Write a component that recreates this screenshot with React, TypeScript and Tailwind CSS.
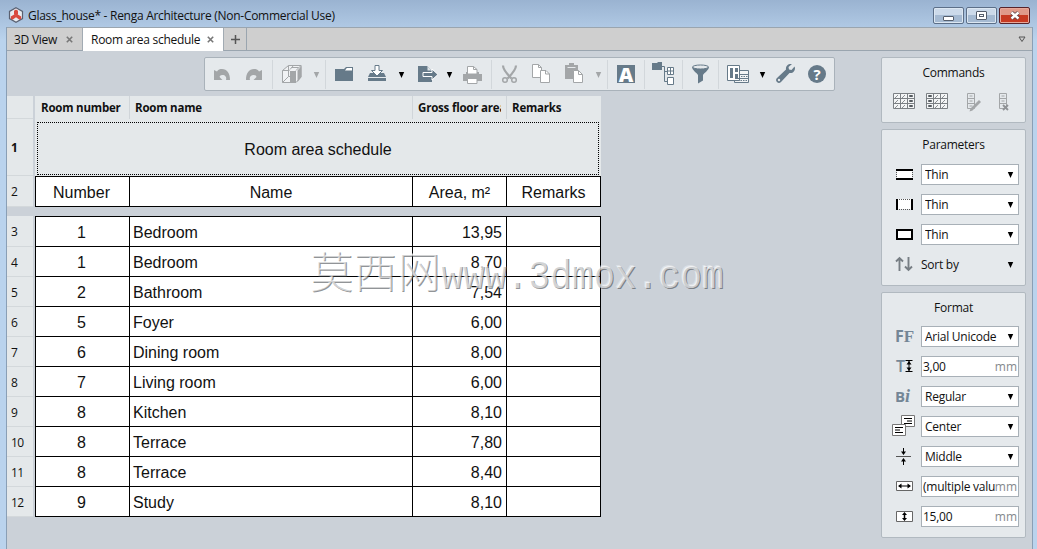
import type { ReactNode } from "react";

const rows = [
    ["1", "Bedroom", "13,95"],
    ["1", "Bedroom", "8,70"],
    ["2", "Bathroom", "7,54"],
    ["5", "Foyer", "6,00"],
    ["6", "Dining room", "8,00"],
    ["7", "Living room", "6,00"],
    ["8", "Kitchen", "8,10"],
    ["8", "Terrace", "7,80"],
    ["8", "Terrace", "8,40"],
    ["9", "Study", "8,10"],
];

function Icon({ children, className = "" }: { children: ReactNode; className?: string }) {
    return (
        <svg className={`size-6 shrink-0 ${className}`} viewBox="0 0 24 24" fill="none">
            {children}
        </svg>
    );
}

function Slot({ className, children }: { className: string; children?: ReactNode }) {
    return <div className={`flex shrink-0 items-center justify-center ${className}`}>{children}</div>;
}

function Sep({ className }: { className: string }) {
    return <Slot className={className}><div className="h-[29px] w-px bg-[#d2d7db]" /></Slot>;
}

function Caret({ className = "text-black" }: { className?: string }) {
    return (
        <svg className={`mt-[2px] h-[6px] w-[7px] shrink-0 ${className}`} viewBox="0 0 7 6">
            <path d="M.8 0h5.400L3.500 6z" fill="currentColor" />
        </svg>
    );
}

function Toolbar() {
    return (
        <div className="flex h-[34px] w-[631px] items-center rounded-[2px] border border-[#a9b2ba] bg-[#e5e9ec]">
            <Slot className="w-[34px]">
                <Icon><path d="M4 8l3 1.500C8 7.600 10 7 12 7c5 0 8 4 8 11h-4c1-3-1-5-3.500-5S9 14.500 10 15.500L12.500 18H4z" fill="#a3a6a8" /></Icon>
            </Slot>
            <Slot className="w-[30px]">
                <Icon><path d="M20 8l-3 1.500C16 7.600 14 7 12 7c-5 0-8 4-8 11h4c-1-3 1-5 3.500-5s3.500 1.500 2.500 2.500L11.500 18H20z" fill="#a3a6a8" /></Icon>
            </Slot>
            <Sep className="w-[6px]" />
            <Slot className="w-[34px]">
                <Icon>
                    <path d="M2.500 8.500l6-5h12.500v11.500l-5 5.500H2.500zM8.500 3.500v11l-6 6M2.500 8.500h7M8.500 14.500h2" stroke="#a3a6a8" fill="#f0f2f4" />
                    <path d="M10 9h6v12h-6zM17.500 8.500l4-4.500v11l-4 5z" fill="#a3a6a8" />
                    <path d="M10 7.500l3.500-4M16 8.500l5-5M11.500 5.500h7" stroke="#a3a6a8" />
                </Icon>
            </Slot>
            <Slot className="w-[14px]"><Caret className="text-[#a3a6a8]" /></Slot>
            <Sep className="w-[4px]" />
            <Slot className="w-[34px]">
                <Icon>
                    <path d="M3 7h9l2-2h7v14H3z" fill="#667a89" />
                    <path d="M13 8.500L14.800 6H20v2.500z" fill="#fff" />
                </Icon>
            </Slot>
            <Slot className="w-[32px]">
                <Icon>
                    <path d="M3 16h18v3H3zM3 15l2-4h14l2 4z" fill="#667a89" />
                    <path d="M10 3.500h4v5h3.500L12 14 6.500 8.500H10z" fill="#fff" stroke="#667a89" />
                </Icon>
            </Slot>
            <Slot className="w-[16px]"><Caret /></Slot>
            <Slot className="w-[36px]">
                <Icon>
                    <path d="M3 4h9l5 5v11H3z" fill="#667a89" />
                    <path d="M12.500 4.500v4h4z" fill="#dfe5e9" />
                    <path d="M8 10.500h9V7l6 5.500-6 5.500v-3.500H8z" fill="#667a89" stroke="#fff" />
                </Icon>
            </Slot>
            <Slot className="w-[8px]"><Caret /></Slot>
            <Slot className="w-[38px]">
                <Icon>
                    <path d="M3 12h3v-2h13v2h3v7H3z" fill="#a3a6a8" />
                    <path d="M7.500 12V4.500h6l3.500 3V12zM7.500 16.500H17v5H7.500z" fill="#fff" stroke="#a3a6a8" />
                    <path d="M13.500 4.500v3H17M6 12.500h13" stroke="#a3a6a8" />
                </Icon>
            </Slot>
            <Sep className="w-px" />
            <Slot className="w-[34px]">
                <Icon>
                    <path d="M6 3.500c0 4 3.500 8 8.500 13M19 3.500c0 4-3.500 8-8.500 13" stroke="#a3a6a8" strokeWidth="2.200" />
                    <circle cx="8" cy="18" r="2.300" stroke="#a3a6a8" strokeWidth="1.500" />
                    <circle cx="17" cy="18" r="2.300" stroke="#a3a6a8" strokeWidth="1.500" />
                </Icon>
            </Slot>
            <Slot className="w-[30px]">
                <Icon>
                    <path d="M3.500 2.500h6l3 3v10h-9z" fill="#fff" stroke="#a3a6a8" />
                    <path d="M9.500 2.500v3h3" stroke="#a3a6a8" />
                    <path d="M11.500 8.500h5.500l3.500 3.500v8.500h-9z" fill="#fff" stroke="#a3a6a8" />
                    <path d="M16.500 8.500V12h4" stroke="#a3a6a8" />
                </Icon>
            </Slot>
            <Slot className="w-[34px]">
                <Icon>
                    <path d="M4 3h4V1h5v2h4v14H4z" fill="#a3a6a8" />
                    <path d="M6.500 5.500h8" stroke="#e5e9ec" />
                    <path d="M12.500 8.500h5l4 4v8h-9z" fill="#fff" stroke="#a3a6a8" />
                    <path d="M17.500 8.500v4h4" stroke="#a3a6a8" />
                </Icon>
            </Slot>
            <Slot className="w-[16px]"><Caret className="text-[#a3a6a8]" /></Slot>
            <Sep className="w-[2px]" />
            <Slot className="w-[36px]">
                <div className="flex size-[18px] items-center justify-center bg-[#667a89] pt-px font-['Open_Sans',sans-serif] text-[20px] leading-none font-extrabold text-white">A</div>
            </Slot>
            <Sep className="w-px" />
            <Slot className="w-[36px]">
                <Icon>
                    <path d="M1 1h5l1-1h4v8H1z" fill="#667a89" />
                    <path d="M11 4.500h2.500v15H17M13.500 9.500H17" stroke="#667a89" />
                    <path d="M16.500 5.500h6v7h-6zM16.500 15.500h6v7h-6z" fill="#fff" stroke="#667a89" />
                    <path d="M16.500 9h6M19.500 5.500v7" stroke="#667a89" />
                </Icon>
            </Slot>
            <Sep className="w-[2px]" />
            <Slot className="w-[34px]">
                <Icon>
                    <path d="M4 5c0 3 5 6 6 8v8.500l5-3V13c1-2 6-5 6-8z" fill="#667a89" />
                    <ellipse cx="12.500" cy="5" rx="8" ry="2" fill="#e5e9ec" stroke="#667a89" />
                </Icon>
            </Slot>
            <Sep className="w-[2px]" />
            <Slot className="w-[38px]">
                <Icon>
                    <path d="M13.500 8.500h9v12h-14v-3" stroke="#667a89" fill="#f3f5f6" />
                    <path d="M1.500 3.500h12v15h-12z" fill="#fff" stroke="#667a89" />
                    <path d="M4 6h3v10H4zM9 6h3v4H9zM9 12h3v4H9z" fill="#667a89" />
                    <path d="M14 12.500h8.500M9 16.500h13.500" stroke="#667a89" />
                    <path d="M9.500 18.500h12.500M15 14.500h7" stroke="#667a89" strokeDasharray="1.500 1" />
                </Icon>
            </Slot>
            <Slot className="w-[10px]"><Caret /></Slot>
            <Slot className="w-[36px]">
                <Icon>
                    <path d="M18 2c-3 0-5.500 2-5 5.500L4 16c-1.500 1.500-1 3 0 4s2.500 1.500 4 0l8.500-9c3.500.5 5.500-2 5.500-5l-.5-1.500L18.500 8l-2.500-.5L15.500 5 19 2z" fill="#667a89" />
                    <circle cx="6" cy="18" r="1.200" fill="#e5e9ec" />
                </Icon>
            </Slot>
            <Slot className="w-[28px]">
                <div className="flex size-[18px] items-center justify-center rounded-full bg-[#667a89] font-['Open_Sans',sans-serif] text-[15px] leading-none font-bold text-white">?</div>
            </Slot>
        </div>
    );
}

function NumCell({ n, bold = false }: { n?: string; bold?: boolean }) {
    return (
        <div className={`mr-[2px] flex w-[26px] shrink-0 items-center border-b border-[#d3d8db] bg-[#e4e8ea] pt-[2px] pl-[4px] text-[12px] tracking-[-0.7px] ${bold ? "font-bold" : ""}`}>{n}</div>
    );
}

function Schedule() {
    return (
        <div className="flex w-[594px] flex-col">
            <div className="flex h-[23px] text-[11.5px] font-bold">
                <NumCell />
                <div className="flex flex-1 bg-[#e4e8ea] tracking-[-0.2px] whitespace-nowrap">
                    <div className="w-[94px] pt-[3px] pl-[6px]">Room number</div>
                    <div className="h-full w-[283px] border-l border-[#d0d5d9] pt-[3px] pl-[5px]">Room name</div>
                    <div className="h-full w-[94px] border-l border-[#d0d5d9] pt-[3px] pr-[5px] pl-[5px]"><div className="overflow-hidden">Gross floor area</div></div>
                    <div className="h-full border-l border-[#d0d5d9] pt-[3px] pl-[5px]">Remarks</div>
                </div>
            </div>
            <div className="flex h-[57px]">
                <NumCell n="1" bold />
                <div className="flex-1 bg-[#e4e8ea] pt-[3px] pr-[2px] pb-px pl-[2px]">
                    <div className="flex h-full items-center justify-center border border-dotted border-black pt-[3px] font-['Liberation_Sans',Arial,sans-serif] text-[16px] tracking-[-0.02px]">Room area schedule</div>
                </div>
            </div>
            <div className="flex h-[31px]">
                <NumCell n="2" />
                <div className="flex flex-1 border-y border-black bg-white text-center font-['Liberation_Sans',Arial,sans-serif] text-[16px] leading-[32px]">
                    <div className="w-[94px] border-l border-black pr-[2px]">Number</div>
                    <div className="w-[283px] border-l border-black">Name</div>
                    <div className="w-[94px] border-l border-black">Area, m²</div>
                    <div className="w-[95px] border-x border-black">Remarks</div>
                </div>
            </div>
            <div className="h-[9px]" />
            {rows.map(([number, name, area], i) => (
                <div key={i} className={`flex ${i === 0 ? "h-[31px]" : "h-[30px]"}`}>
                    <NumCell n={String(i + 3)} />
                    <div className={`flex flex-1 border-b border-black bg-white font-['Liberation_Sans',Arial,sans-serif] text-[16px] leading-[32px] ${i === 0 ? "border-t" : ""}`}>
                        <div className="w-[94px] border-l border-black pr-[2px] text-center">{number}</div>
                        <div className="w-[283px] border-l border-black pl-[3px]">{name}</div>
                        <div className="w-[94px] border-l border-black pr-[4px] text-right">{area}</div>
                        <div className="w-[95px] border-x border-black" />
                    </div>
                </div>
            ))}
        </div>
    );
}

function Panel({ title, className, children }: { title: string; className: string; children: ReactNode }) {
    return (
        <div className={`w-[145px] rounded-[2px] border border-[#b1b9c0] bg-[#e5e9ec] pt-[6px] ${className}`}>
            <div className="h-[18px] text-center leading-[18px]">{title}</div>
            {children}
        </div>
    );
}

function Field({ icon, value, unit, plain = false }: { icon: ReactNode; value: string; unit?: string; plain?: boolean }) {
    return (
        <div className="flex h-[30px] items-center pl-[10px]">
            {icon}
            <div className={`ml-[5px] flex h-[21px] w-[98px] items-center border pr-[4px] whitespace-nowrap ${plain ? "border-transparent" : "border-[#a8b0b7] bg-white"} ${unit ? "pl-px" : plain ? "pl-0" : "pl-[3px]"}`}>
                <div className={`min-w-0 flex-1 overflow-hidden pt-px ${plain ? "-ml-px" : ""}`}>{value}</div>
                {unit ? <span className="-mr-[3px] pt-px tracking-normal text-[#85898d]">{unit}</span> : <Caret />}
            </div>
        </div>
    );
}

const cellGrid = (x: number) => (
    <>
        <path d="M1.500 3.500h21v15h-21zM1.500 8.500h21M1.500 13.500h21M8.500 3.500v15M15.500 3.500v15" stroke="#7b8084" fill="#f3f5f6" />
        <path d={x ? "M3 8l3-3m-3 8l3-3m-3 8l3-3M10 8l3-3m-3 8l3-3m-3 8l3-3" : "M10 8l3-3m-3 8l3-3m-3 8l3-3M17 8l3-3m-3 8l3-3m-3 8l3-3"} stroke="#8b8f92" />
        <path d={x ? "M17.500 5.500h3v1h-3zM17.500 10.500h3v1h-3zM17.500 15.500h3v1h-3z" : "M3.500 5.500h3v1h-3zM3.500 10.500h3v1h-3zM3.500 15.500h3v1h-3z"} stroke="#555b60" />
    </>
);

function Sidebar() {
    return (
        <div className="flex flex-col gap-[6px] text-[12px] tracking-[-0.25px]">
            <Panel title="Commands" className="h-[66px]">
                <div className="flex pt-[8px] pl-[10px]">
                    <Icon>{cellGrid(1)}</Icon>
                    <Icon className="ml-[9px]">{cellGrid(0)}</Icon>
                    <Icon className="ml-[9px]">
                        <path d="M9.500 3.500h7v15h-7zM9.500 8.500h7M9.500 13.500h7M11.500 6h3M11.500 11h3M11.500 16h3" stroke="#a3a6a8" />
                        <path d="M21 10l2 2-8.500 8.500-3 1 1-3z" fill="#a3a6a8" />
                    </Icon>
                    <Icon className="ml-[8px]">
                        <path d="M9.500 3.500h7v15h-7zM9.500 8.500h7M9.500 13.500h7M11.500 6h3M11.500 11h3" stroke="#a3a6a8" />
                        <path d="M13 15l5 5m0-5l-5 5" stroke="#8f9295" strokeWidth="1.800" />
                    </Icon>
                </div>
            </Panel>
            <Panel title="Parameters" className="h-[157px]">
                <div className="pt-[5px]">
                    <Field value="Thin" icon={<Icon><path d="M5 8h15v9H5z" fill="#fff" /><path d="M4.500 8v9M20.500 8v9" stroke="#555" strokeDasharray="1 1" /><path d="M4 8h17M4 17h17" stroke="#000" strokeWidth="2" /></Icon>} />
                    <Field value="Thin" icon={<Icon><path d="M5 7h15v10H5z" fill="#fff" /><path d="M5 7.500h15M5 17.500h15" stroke="#555" strokeDasharray="1 1" /><path d="M5 7v11M20 7v11" stroke="#000" strokeWidth="2" /></Icon>} />
                    <Field value="Thin" icon={<Icon><path d="M5 8h15v9H5z" fill="#fff" stroke="#000" strokeWidth="2" /></Icon>} />
                    <Field plain value="Sort by" icon={<Icon><path d="M7.500 19V6M4 9.500L7.500 6l3.500 3.500M16.500 5v13M13 14.500l3.500 3.500 3.500-3.500" stroke="#777e84" strokeWidth="1.900" /></Icon>} />
                </div>
            </Panel>
            <Panel title="Format" className="h-[246px]">
                <div className="pt-[4px]">
                    <Field value="Arial Unicode" icon={<div className="w-6 pl-[3px] text-[16px] leading-none font-bold tracking-normal whitespace-nowrap text-[#748696]">F<span className="font-['Liberation_Serif',serif] text-[17px] font-bold">F</span></div>} />
                    <Field value="3,00" unit="mm" icon={<div className="flex w-6 items-center pl-[4px] text-[16px] leading-none font-semibold text-[#748696]">T<svg className="h-[12px] w-[8px]" viewBox="0 0 8 12"><path d="M.500.500h7M.500 11.500h7M4 1v10" stroke="#000" /><path d="M4 1L1.500 4.500h5zM4 11L1.500 7.500h5z" fill="#000" /></svg></div>} />
                    <Field value="Regular" icon={<div className="w-6 pl-[3px] text-[15px] leading-none font-bold tracking-normal whitespace-nowrap text-[#748696]">B<i className="font-['Liberation_Serif',serif] text-[18px]">i</i></div>} />
                    <Field value="Center" icon={<Icon><path d="M9.500 1.500h13v11h-13z" fill="#fff" stroke="#777" /><path d="M12 4.500h8M15 7h5M12 9.500h8" stroke="#000" /><path d="M.500 10.500h13v11H.500z" fill="#fff" stroke="#777" /><path d="M3 13.500h8M3 16h5M3 18.500h8" stroke="#000" /></Icon>} />
                    <Field value="Middle" icon={<Icon><path d="M4 12.500h15" stroke="#555" /><path d="M11.500 4v6M11.500 21v-6" stroke="#000" /><path d="M9 7.500h5l-2.500 3.500zM9 17.500h5l-2.500-3.500z" fill="#000" /></Icon>} />
                    <Field value="(multiple values)" unit="mm" icon={<Icon><path d="M4.500 7.500h16v9h-16z" fill="#fff" stroke="#666" /><path d="M7 12h11" stroke="#000" /><path d="M6 12l3.500-2.500v5zM19 12l-3.500-2.500v5z" fill="#000" /></Icon>} />
                    <Field value="15,00" unit="mm" icon={<Icon><path d="M4.500 7.500h16v10h-16z" fill="#fff" stroke="#666" /><path d="M12.500 10v5" stroke="#000" strokeWidth="1.500" /><path d="M12.500 8l-2.500 3h5zM12.500 17L10 14h5z" fill="#000" /></Icon>} />
                </div>
            </Panel>
        </div>
    );
}

function TitleBar() {
    return (
        <div className="flex h-[27px] items-center pt-[3px] pr-[7px] pl-[8px]">
            <svg className="size-4" viewBox="0 0 16 16">
                <path d="M8 .8l6.500 3.600v7.200L8 15.200l-6.500-3.600V4.400z" fill="#e9edf2" stroke="#5a6070" strokeWidth="1.200" />
                <path d="M8 2.500l2 1.200v3.500L8 8.500 6 7.200V3.700zM2.800 9.500l3.400-2L8 8.500v1.700l-3.500 2.500-1.700-1zM13.200 9.500l-3.400-2L8 8.500v1.700l3.500 2.500 1.700-1z" fill="#d94b40" />
            </svg>
            <span className="ml-[4px] flex-1 pt-[2px] text-[12px] tracking-[-0.28px] whitespace-nowrap">Glass_house* - Renga Architecture (Non-Commercial Use)</span>
            <div className="flex gap-[2px]">
                <div className="flex h-[17px] w-[31px] justify-center rounded-[2px] border border-[#5c6f88] bg-linear-to-b from-[#ccdaea] from-50% to-[#a5bad2] to-50% pt-[8px] shadow-[inset_0_0_0_1px_#dce7f2]"><div className="h-[5px] w-[11px] rounded-[1px] border border-[#555e6c] bg-white" /></div>
                <div className="flex h-[17px] w-[31px] items-center justify-center rounded-[2px] border border-[#5c6f88] bg-linear-to-b from-[#ccdaea] from-50% to-[#a5bad2] to-50% shadow-[inset_0_0_0_1px_#dce7f2]"><div className="flex h-[9px] w-[11px] items-center justify-center rounded-[1px] border border-[#555e6c] bg-white"><div className="h-[3px] w-[5px] border border-[#555e6c]" /></div></div>
                <div className="flex h-[17px] w-[31px] items-center justify-center rounded-[2px] border border-[#57232a] bg-linear-to-b from-[#e09a8a] from-50% to-[#c73a22] to-50% shadow-[inset_0_0_0_1px_#e8a89a]">
                    <svg className="h-[9px] w-[12px]" viewBox="0 0 12 9"><path d="M2.500 1.500l7 6m0-6l-7 6" stroke="#5d4248" strokeWidth="4" /><path d="M2.500 1.500l7 6m0-6l-7 6" stroke="#fff" strokeWidth="2.400" /></svg>
                </div>
            </div>
        </div>
    );
}

function CloseMark() {
    return <svg className="size-[7px]" viewBox="0 0 7 7"><path d="M.800.800l5.400 5.400m0-5.400L.800 6.200" stroke="#777" strokeWidth="1.600" /></svg>;
}

export default function App() {
    return (
        <div className="relative flex h-[549px] w-[1037px] flex-col overflow-hidden bg-linear-to-b from-[#9ab3d1] to-[#bad3ed] to-[40px] font-['Open_Sans','Segoe_UI',sans-serif] text-[11.5px] text-[#111]">
            <TitleBar />
            <div className="mr-[4px] ml-[6px] flex flex-1 flex-col border-x border-[#8a9fb5] bg-[#cbd1d8]">
                <div className="flex h-[24px] shrink-0 border-t border-b border-[#9aa5af] bg-[#cfcfcf] text-[12px] tracking-[-0.27px]">
                    <div className="flex w-[76px] items-center border-r border-[#a2abb3] pl-[7px]"><span className="w-[52px] pt-[2px] whitespace-nowrap">3D View</span><CloseMark /></div>
                    <div className="-mb-px flex w-[141px] items-center border-r border-[#a2abb3] bg-white pl-[8px]"><span className="w-[116px] pt-px whitespace-nowrap">Room area schedule</span><CloseMark /></div>
                    <div className="flex w-[23px] items-center justify-center border-r border-[#9aa5af]">
                        <svg className="size-[9px]" viewBox="0 0 9 9"><path d="M4.500 0v9M0 4.500h9" stroke="#555" strokeWidth="1.500" /></svg>
                    </div>
                    <div className="flex flex-1 items-center justify-end pr-[6px]">
                        <svg className="h-[7px] w-[8px]" viewBox="0 0 8 7"><path d="M1 1h6L4 5.500z" fill="none" stroke="#555" /></svg>
                    </div>
                </div>
                <div className="flex flex-1 justify-between pr-[6px]">
                    <div className="flex flex-col pt-[6px]">
                        <div className="pl-[197px]"><Toolbar /></div>
                        <div className="pt-[5px]"><Schedule /></div>
                    </div>
                    <div className="pt-[6px]"><Sidebar /></div>
                </div>
            </div>
            <div className="absolute top-[244px] left-[310px] flex items-baseline text-[36.66px] leading-[50px] font-light whitespace-pre text-white/60 [text-shadow:1px_1px_0_rgba(70,75,80,0.6),-1px_-1px_0_rgba(255,255,255,0.35)]">
                <span className="font-['Noto_Sans_CJK_SC',sans-serif] text-[43px] tracking-[0.6px]">莫西网</span>
                <span className="origin-[0_75%] scale-y-112 font-['Liberation_Mono',monospace] tracking-[-0.25px]">www.3dmox.com</span>
            </div>
        </div>
    );
}
